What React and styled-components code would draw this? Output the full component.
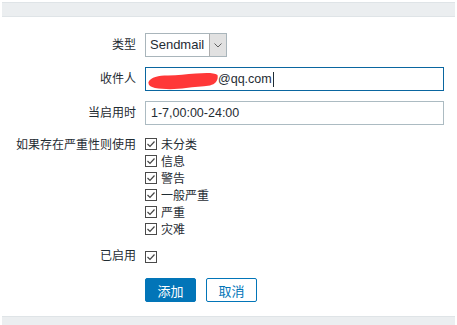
import React from 'react';
import styled, { createGlobalStyle } from 'styled-components';

const GlobalStyle = createGlobalStyle`
  html, body {
    margin: 0;
    padding: 0;
    background: #ffffff;
    overflow: hidden;
  }
  body {
    font-family: "Liberation Sans", Arial, "Noto Sans CJK SC", sans-serif;
    font-size: 12px;
    color: #1f2c33;
  }
`;

const Band = styled.div`
  margin: ${props => props.bottom ? '14px 2px 0 2px' : '2px 2px 0 2px'};
  height: ${props => props.bottom ? '20px' : '13px'};
  background: #ebeef0;
  border-top: 1px solid #dfe4e7;
  border-bottom: 1px solid #dfe4e7;
`;

const Form = styled.div`
  padding: 16px 13px 0 0;
  display: flex;
  flex-direction: column;
`;

const Row = styled.div`
  display: grid;
  grid-template-columns: 136px 1fr;
  column-gap: 9px;
  align-items: ${props => props.top ? 'start' : 'center'};
  margin-top: ${props => props.gap || 0}px;
`;

const Label = styled.div`
  text-align: right;
  line-height: ${props => props.lh || 24}px;
  white-space: nowrap;
`;

const SelectBox = styled.div`
  width: 82px;
  height: 24px;
  box-sizing: border-box;
  border: 1px solid #a9b5bb;
  background: #fff;
  display: flex;
  align-items: stretch;
`;

const SelectText = styled.div`
  flex: 1;
  padding-left: 4px;
  font-size: 13px;
  line-height: 22px;
  color: #1f2c33;
`;

const SelectButton = styled.div`
  width: 16px;
  background: #e1e1e1;
  border-left: 1px solid #adadad;
  display: flex;
  align-items: center;
  justify-content: center;
`;

const Input = styled.div`
  height: 24px;
  box-sizing: border-box;
  border: 1px solid ${props => props.focus ? '#0a66a0' : '#acbbc2'};
  background: #fff;
  padding-left: 5px;
  display: flex;
  align-items: center;
  font-size: 12.5px;
  color: #1f2c33;
`;

const Caret = styled.span`
  display: inline-block;
  width: 1px;
  height: 15px;
  margin-left: 1px;
  background: #1f2c33;
`;

const CheckList = styled.div`
  display: flex;
  flex-direction: column;
`;

const CheckRow = styled.div`
  display: flex;
  align-items: center;
  height: 17px;
  gap: 4px;
`;

const Box = styled.span`
  width: 12px;
  height: 12px;
  box-sizing: border-box;
  border: 1px solid #4a4a4a;
  background: #fff;
  display: flex;
  align-items: center;
  justify-content: center;
`;

const Buttons = styled.div`
  display: flex;
  gap: 10px;
`;

const Button = styled.button`
  width: 51px;
  height: 24px;
  box-sizing: border-box;
  border-radius: 2px;
  border: 1px solid #0275b8;
  background: ${props => props.primary ? '#0275b8' : '#ffffff'};
  color: ${props => props.primary ? '#ffffff' : '#0275b8'};
  font-family: inherit;
  font-size: 13px;
  padding: 0;
`;

const Check = () => (
  <Box>
    <svg width="10" height="10" viewBox="0 0 10 10">
      <path d="M1.5 5 L4 7.5 L8.5 2.5" fill="none" stroke="#444" strokeWidth="1.2" />
    </svg>
  </Box>
);

const severities = ['未分类', '信息', '警告', '一般严重', '严重', '灾难'];

export default function App() {
  return (
    <>
      <GlobalStyle />
      <Band />
      <Form>
        <Row>
          <Label>类型</Label>
          <SelectBox>
            <SelectText>Sendmail</SelectText>
            <SelectButton>
              <svg width="8" height="5" viewBox="0 0 8 5">
                <path d="M0.5 0.5 L4 4 L7.5 0.5" fill="none" stroke="#606060" strokeWidth="1" />
              </svg>
            </SelectButton>
          </SelectBox>
        </Row>
        <Row gap={10}>
          <Label>收件人</Label>
          <Input focus>
            <svg width="70" height="20" viewBox="0 0 70 20" style={{ marginLeft: -3, marginTop: 3 }}>
              <path
                d="M0.5 11 C3 6, 10 4.5, 20 4.5 C30 4.5, 38 3, 48 2.5 C57 2, 66 1.5, 69.5 4 C70.5 9, 68 13, 62 14.5 C54 16, 46 15.5, 38 17 C28 18.5, 16 18.5, 7 17 C2 16, 0 14, 0.5 11 Z"
                fill="#ff3838"
              />
            </svg>
            <span>@qq.com</span>
            <Caret />
          </Input>
        </Row>
        <Row gap={10}>
          <Label>当启用时</Label>
          <Input>1-7,00:00-24:00</Input>
        </Row>
        <Row gap={10} top>
          <Label lh={20}>如果存在严重性则使用</Label>
          <CheckList>
            {severities.map((s, i) => (
              <CheckRow key={i}>
                <Check />
                <span>{s}</span>
              </CheckRow>
            ))}
          </CheckList>
        </Row>
        <Row gap={11}>
          <Label lh={17}>已启用</Label>
          <CheckRow>
            <Check />
          </CheckRow>
        </Row>
        <Row gap={13}>
          <div />
          <Buttons>
            <Button primary>添加</Button>
            <Button>取消</Button>
          </Buttons>
        </Row>
      </Form>
      <Band bottom />
    </>
  );
}
